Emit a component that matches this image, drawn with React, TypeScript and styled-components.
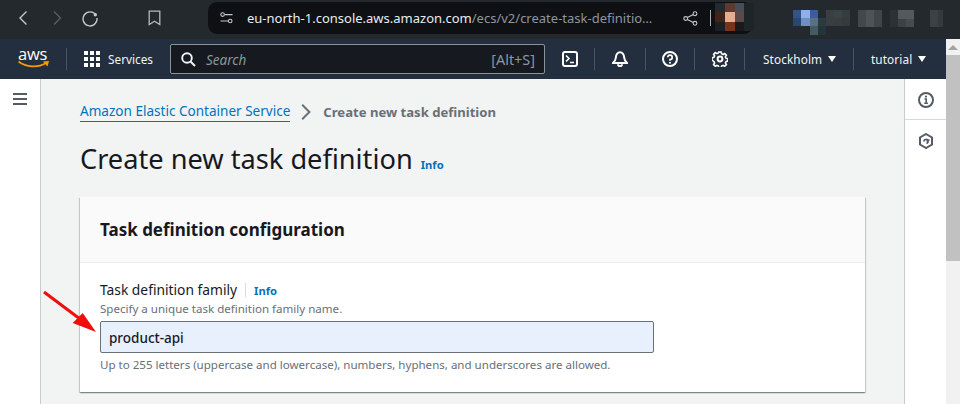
import React from "react";
import styled, { createGlobalStyle } from "styled-components";

const Global = createGlobalStyle`
  html, body { margin: 0; padding: 0; width: 960px; height: 404px; overflow: hidden; background: #f2f3f3; }
  * { box-sizing: border-box; }
  body { font-family: "Noto Sans", "Open Sans", sans-serif; }
`;

const Page = styled.div`
  position: relative;
  width: 960px;
  height: 404px;
  display: flex;
  flex-direction: column;
  overflow: hidden;
`;

const BrowserBar = styled.header`
  height: 39px;
  flex: none;
  background: #23292d;
  display: flex;
  align-items: flex-start;
`;

const ChromeBtn = styled.div<{ $w: number }>`
  width: ${(p) => p.$w}px;
  height: 36px;
  flex: none;
  display: flex;
  align-items: center;
  justify-content: center;
`;

const UrlBar = styled.div`
  margin-top: 2px;
  margin-left: 11px;
  width: 545px;
  height: 32px;
  flex: none;
  background: #0e1014;
  border-radius: 9px;
  display: flex;
  align-items: center;
  padding-left: 12px;
`;

const UrlText = styled.div`
  margin-left: 14px;
  font-size: 13px;
  line-height: 32px;
  white-space: nowrap;
  color: #e9ecef;
  width: 436px;
  flex: none;
  overflow: hidden;
`;

const UrlDim = styled.span`
  color: #8f969c;
`;

const UrlSep = styled.div`
  width: 1px;
  height: 16px;
  flex: none;
  background: #a9adb0;
  margin-left: 12px;
`;

const Blur = styled.svg`
  display: block;
  flex: none;
  shape-rendering: crispEdges;
`;

const Nav = styled.nav`
  height: 40px;
  width: 946px;
  flex: none;
  background: #232f3e;
  display: flex;
  align-items: center;
  color: #f2f3f3;
  font-size: 12px;
`;

const Logo = styled.div`
  width: 66px;
  height: 40px;
  flex: none;
  position: relative;
  padding-left: 18px;
`;

const LogoText = styled.span`
  display: block;
  font-size: 16.5px;
  line-height: 16px;
  padding-top: 7px;
  color: #ffffff;
  letter-spacing: -0.2px;
  font-family: "Open Sans", sans-serif;
`;

const Smile = styled.svg`
  position: absolute;
  left: 18px;
  top: 21px;
`;

const Sep = styled.div`
  width: 1px;
  height: 22px;
  background: #495566;
  flex: none;
`;

const ServicesBtn = styled.div`
  display: flex;
  align-items: center;
  gap: 8px;
  margin-left: 17px;
  width: 86px;
  flex: none;
  line-height: 16px;
  font-size: 11.8px;
`;

const SearchBox = styled.div`
  width: 375px;
  height: 30px;
  flex: none;
  background: #16191f;
  border: 1px solid #879596;
  border-radius: 2px;
  display: flex;
  align-items: center;
  padding: 0 9px 0 10px;
`;

const SearchHint = styled.span`
  font-style: italic;
  color: #8a979e;
  font-size: 13.5px;
  line-height: 20px;
  padding-top: 1px;
  margin-left: 10px;
  flex: 1;
`;

const Shortcut = styled.span`
  color: #8a979e;
  font-size: 14.4px;
  line-height: 20px;
  padding-top: 1px;
`;

const NavIcon = styled.div<{ $w: number }>`
  width: ${(p) => p.$w}px;
  height: 40px;
  flex: none;
  display: flex;
  align-items: center;
  justify-content: center;
`;

const NavMenu = styled.div<{ $w: number; $pl: number }>`
  width: ${(p) => p.$w}px;
  padding-left: ${(p) => p.$pl}px;
  flex: none;
  display: flex;
  align-items: center;
  gap: 6px;
  font-size: 11.8px;
  letter-spacing: 0.1px;
`;

const Caret = styled.i`
  width: 0;
  height: 0;
  border-left: 4.5px solid transparent;
  border-right: 4.5px solid transparent;
  border-top: 6px solid #ffffff;
`;

const Body = styled.div`
  flex: 1;
  display: flex;
  width: 100%;
  min-height: 0;
`;

const LeftRail = styled.aside`
  width: 41px;
  flex: none;
  background: #ffffff;
  border-right: 1px solid #c6cccc;
  padding: 14px 0 0 13px;
`;

const Main = styled.main`
  flex: 1;
  background: #f2f3f3;
  padding: 23px 39px 0 39px;
  min-width: 0;
`;

const Crumbs = styled.div`
  display: flex;
  align-items: center;
  height: 20px;
  line-height: 18px;
`;

const CrumbLink = styled.a`
  color: #0073bb;
  border-bottom: 1px solid #0073bb;
  font-size: 13.55px;
  line-height: 19px;
  height: 20px;
`;

const CrumbCurrent = styled.span`
  color: #687078;
  font-weight: 700;
  font-size: 13.1px;
  margin-left: 12px;
`;

const TitleRow = styled.div`
  display: flex;
  align-items: baseline;
  margin-top: 15px;
  height: 44px;
`;

const Title = styled.h1`
  margin: 0;
  font-size: 27.2px;
  font-weight: 400;
  line-height: 44px;
  color: #16191f;
`;

const InfoLink = styled.a<{ $ml: number }>`
  color: #0073bb;
  font-weight: 700;
  font-size: 11.2px;
  margin-left: ${(p) => p.$ml}px;
`;

const Card = styled.section`
  margin-top: 16px;
  background: #ffffff;
  width: 785px;
  height: 195px;
  box-shadow: 0 1px 1px 0 rgba(0, 28, 36, 0.3), 1px 1px 1px 0 rgba(0, 28, 36, 0.15), -1px 1px 1px 0 rgba(0, 28, 36, 0.15);
`;

const CardHeader = styled.div`
  height: 66px;
  background: #fafafa;
  border-bottom: 1px solid #eaeded;
  padding: 0 20px;
  display: flex;
  align-items: center;
`;

const CardTitle = styled.h2`
  margin: 0;
  font-size: 17px;
  font-weight: 700;
  color: #16191f;
  line-height: 22px;
`;

const CardBody = styled.div`
  padding: 18px 20px 0;
`;

const LabelRow = styled.div`
  display: flex;
  align-items: center;
  height: 18px;
`;

const Label = styled.label`
  font-size: 13.8px;
  color: #16191f;
  line-height: 18px;
`;

const LabelSep = styled.span`
  width: 1px;
  height: 14px;
  background: #d5dbdb;
  margin-left: 8px;
`;

const Hint = styled.div`
  font-size: 11.55px;
  line-height: 16px;
  color: #687078;
  margin-top: 2px;
`;

const Field = styled.input`
  display: block;
  width: 554px;
  height: 32px;
  margin: 4px 0;
  padding: 2px 8px 0;
  background: #e8f0fe;
  border: 1px solid #687078;
  border-radius: 2px;
  font: inherit;
  font-size: 13.5px;
  font-weight: 500;
  color: #16191f;
  outline: none;
`;

const RightRail = styled.aside`
  width: 42px;
  flex: none;
  background: #ffffff;
  border-left: 1px solid #c6cccc;
  display: flex;
  flex-direction: column;
`;

const RailCell = styled.div<{ $h: number; $line?: boolean }>`
  height: ${(p) => p.$h}px;
  display: flex;
  align-items: flex-start;
  justify-content: center;
  padding-top: 13px;
  border-bottom: ${(p) => (p.$line ? "1px solid #d5dbdb" : "none")};
`;

const Scrollbar = styled.div`
  width: 14px;
  flex: none;
  background: #f1f1f1;
  margin-top: -40px;
  display: flex;
  flex-direction: column;
  align-items: center;
  position: relative;
  z-index: 2;
`;

const ScrollArrow = styled.i`
  width: 0;
  height: 0;
  margin-top: 6px;
  border-left: 5px solid transparent;
  border-right: 5px solid transparent;
  border-bottom: 5px solid #a3a3a3;
`;

const ScrollThumb = styled.div`
  margin-top: 5px;
  width: 14px;
  height: 206px;
  background: #c1c1c1;
`;

const Arrow = styled.svg`
  position: absolute;
  left: 40px;
  top: 288px;
  pointer-events: none;
`;

const blur1: [number, number, number, number, string][] = [
  [0, 0, 10, 10, "#23292d"], [10, 0, 10, 10, "#5c3b2e"], [20, 0, 9, 10, "#4c4c56"],
  [0, 10, 10, 10, "#42231a"], [10, 10, 10, 10, "#e7ad93"], [20, 10, 9, 10, "#5c4a4b"],
  [29, 0, 10, 30, "#1e2529"], [0, 20, 10, 10, "#1c2024"], [10, 20, 10, 10, "#7c3216"], [20, 20, 9, 10, "#1a1a1d"],
];

const blur2: [number, number, number, number, string][] = [
  [0, 0, 9, 8, "#8fb1ea"], [9, 0, 8, 8, "#3c5d9b"], [-8, 0, 8, 8, "#345188"],
  [-8, 8, 8, 8, "#2c4672"], [0, 8, 9, 8, "#6f8fc2"], [9, 8, 8, 8, "#5a7280"],
  [17, 8, 8, 8, "#2c3b40"], [9, 16, 8, 9, "#465a62"], [17, 16, 8, 9, "#25343a"],
  [25, 0, 8, 8, "#394043"], [33, 0, 8, 8, "#3b4345"], [41, 0, 8, 8, "#363d3f"],
  [25, 8, 8, 8, "#393f41"], [33, 8, 8, 8, "#363e40"], [41, 8, 8, 8, "#343b3d"],
  [57, 0, 8, 17, "#43484d"], [65, 0, 8, 17, "#4e5357"], [73, 0, 8, 17, "#3f4649"],
  [89, 0, 8, 17, "#2b3236"], [97, 0, 16, 9, "#53595c"], [97, 9, 8, 8, "#3b4245"], [105, 9, 8, 8, "#464c4e"],
  [129, 0, 8, 17, "#3b4144"], [137, 0, 8, 17, "#33393c"],
];

const ic = { fill: "none", stroke: "#ffffff", strokeWidth: 2 };

export default function App() {
  return (
    <Page>
      <Global />
      <BrowserBar>
        <ChromeBtn $w={46}>
          <svg width="12" height="16" viewBox="0 0 12 16"><path d="M9.5 1.5 3 8l6.5 6.5" fill="none" stroke="#c4c8cb" strokeWidth="1.4" /></svg>
        </ChromeBtn>
        <ChromeBtn $w={22}>
          <svg width="12" height="16" viewBox="0 0 12 16"><path d="M3 1.5 9.5 8 3 14.5" fill="none" stroke="#585e62" strokeWidth="1.4" /></svg>
        </ChromeBtn>
        <ChromeBtn $w={44}>
          <svg width="18" height="18" viewBox="0 0 18 18"><path d="M15 6.2A7 7 0 1 0 16 9" fill="none" stroke="#c4c8cb" strokeWidth="1.4" /><circle cx="14.3" cy="5.8" r="1.7" fill="#c4c8cb" /></svg>
        </ChromeBtn>
        <ChromeBtn $w={85}>
          <svg width="13" height="16" viewBox="0 0 13 16"><path d="M1.2 1.2h10.6v13.4L6.5 11.2 1.2 14.6z" fill="none" stroke="#b4b8bb" strokeWidth="1.3" /></svg>
        </ChromeBtn>
        <UrlBar>
          <svg width="13" height="12" viewBox="0 0 13 12" fill="none" stroke="#c4c8cb" strokeWidth="1.1" style={{ flex: "none" }}>
            <circle cx="2.6" cy="2.6" r="1.8" /><path d="M5 2.6h7.5M0.5 9H8" /><circle cx="10.2" cy="9" r="1.8" />
          </svg>
          <UrlText>
            eu-north-1.console.aws.amazon.com<UrlDim>/ecs/v2/create-task-definitio…</UrlDim>
          </UrlText>
          <svg width="15" height="15" viewBox="0 0 15 15" fill="none" stroke="#c4c8cb" strokeWidth="1.1" style={{ flex: "none" }}>
            <circle cx="12" cy="2.7" r="1.9" /><circle cx="2.7" cy="7.5" r="1.9" /><circle cx="12" cy="12.3" r="1.9" /><path d="M4.4 6.6 10.3 3.6M4.4 8.4l5.9 3" />
          </svg>
          <UrlSep />
          <Blur width="39" height="28" viewBox="0 0 39 30" preserveAspectRatio="none" style={{ marginLeft: 4, marginTop: -2 }}>
            {blur1.map((b, i) => <rect key={i} x={b[0]} y={b[1]} width={b[2]} height={b[3]} fill={b[4]} />)}
          </Blur>
        </UrlBar>
        <Blur width="150" height="28" viewBox="-8 0 150 28" style={{ marginLeft: 40, marginTop: 10, flex: "none" }}>
          {blur2.map((b, i) => <rect key={i} x={b[0]} y={b[1]} width={b[2]} height={b[3]} fill={b[4]} />)}
        </Blur>
      </BrowserBar>
      <Nav>
        <Logo>
          <LogoText>aws</LogoText>
          <Smile width="32" height="10" viewBox="0 0 32 10">
            <path d="M0.5 1.5C8 7.5 20 8 28 3" fill="none" stroke="#ff9900" strokeWidth="1.7" />
            <path d="M25 1.5 31 1l-1.5 5.5z" fill="#ff9900" />
          </Smile>
        </Logo>
        <Sep />
        <ServicesBtn>
          <svg width="16" height="16" viewBox="0 0 16 16" fill="#fff" style={{ flex: "none" }}>
            {[0, 6, 12].flatMap((y) => [0, 6, 12].map((x) => <rect key={`${x}${y}`} x={x} y={y} width="4" height="4" />))}
          </svg>
          <span>Services</span>
        </ServicesBtn>
        <SearchBox>
          <svg width="15" height="15" viewBox="0 0 15 15" fill="none" stroke="#f2f3f3" strokeWidth="1.9" style={{ flex: "none" }}>
            <circle cx="6" cy="6" r="4.8" /><path d="m9.5 9.5 4.5 4.5" />
          </svg>
          <SearchHint>Search</SearchHint>
          <Shortcut>[Alt+S]</Shortcut>
        </SearchBox>
        <NavIcon $w={49}>
          <svg width="16" height="16" viewBox="0 0 16 16" {...ic}>
            <rect x="1" y="1" width="14" height="14" rx="2" /><path d="m4 4.5 3 3-3 3M8 11.5h4" strokeWidth="1.6" />
          </svg>
        </NavIcon>
        <Sep />
        <NavIcon $w={50}>
          <svg width="16" height="16" viewBox="0 0 16 16" {...ic}>
            <path d="M1 12h14c-1.6-1.3-2.6-3-2.8-5.3C12 3.8 10.4 1.2 8 1.2S4 3.8 3.8 6.7C3.6 9 2.6 10.7 1 12z" /><path d="M6 13.2a2 2 0 0 0 4 0" />
          </svg>
        </NavIcon>
        <Sep />
        <NavIcon $w={48}>
          <svg width="16" height="16" viewBox="0 0 16 16" {...ic}>
            <circle cx="8" cy="8" r="7" /><path d="M5.8 6.3A2.2 2.2 0 1 1 8 8.6v1.1" strokeWidth="1.7" /><circle cx="8" cy="11.8" r="1" fill="#fff" stroke="none" />
          </svg>
        </NavIcon>
        <Sep />
        <NavIcon $w={49}>
          <svg width="16" height="16" viewBox="0 0 16 16" {...ic}>
            <circle cx="8" cy="8" r="2.4" />
            <path d="M6.8 1h2.4l.4 1.8 1.5.7 1.6-1 1.7 1.7-1 1.6.7 1.5 1.8.4v2.4l-1.8.4-.7 1.5 1 1.6-1.7 1.7-1.6-1-1.5.7-.4 1.8H6.8l-.4-1.8-1.5-.7-1.6 1-1.7-1.7 1-1.6-.7-1.5L.1 9.2V6.8l1.8-.4.7-1.5-1-1.6 1.7-1.7 1.6 1 1.5-.7z" strokeWidth="1.6" />
          </svg>
        </NavIcon>
        <Sep />
        <NavMenu $w={108} $pl={18}>Stockholm <Caret /></NavMenu>
        <Sep />
        <NavMenu $w={92} $pl={17}>tutorial <Caret /></NavMenu>
      </Nav>
      <Body>
        <LeftRail>
          <svg width="14" height="12" viewBox="0 0 14 12" fill="#545b64" style={{ display: "block" }}>
            <rect y="0" width="14" height="2" /><rect y="5" width="14" height="2" /><rect y="10" width="14" height="2" />
          </svg>
        </LeftRail>
        <Main>
          <Crumbs>
            <CrumbLink>Amazon Elastic Container Service</CrumbLink>
            <svg width="10" height="16" viewBox="0 0 10 16" style={{ marginLeft: 11, flex: "none" }}>
              <path d="M1.2 0.8 8.4 8l-7.2 7.2" fill="none" stroke="#687078" strokeWidth="2" />
            </svg>
            <CrumbCurrent>Create new task definition</CrumbCurrent>
          </Crumbs>
          <TitleRow>
            <Title>Create new task definition</Title>
            <InfoLink $ml={8}>Info</InfoLink>
          </TitleRow>
          <Card>
            <CardHeader>
              <CardTitle>Task definition configuration</CardTitle>
            </CardHeader>
            <CardBody>
              <LabelRow>
                <Label>Task definition family</Label>
                <LabelSep />
                <InfoLink $ml={8}>Info</InfoLink>
              </LabelRow>
              <Hint>Specify a unique task definition family name.</Hint>
              <Field readOnly value="product-api" />
              <Hint>Up to 255 letters (uppercase and lowercase), numbers, hyphens, and underscores are allowed.</Hint>
            </CardBody>
          </Card>
        </Main>
        <RightRail>
          <RailCell $h={41} $line>
            <svg width="16" height="16" viewBox="0 0 16 16" fill="none" stroke="#545b64" strokeWidth="2">
              <circle cx="8" cy="8" r="7" /><path d="M6.5 7H8.2v4M6.3 11.2h3.6" strokeWidth="1.6" /><circle cx="8" cy="4.6" r="1.1" fill="#545b64" stroke="none" />
            </svg>
          </RailCell>
          <RailCell $h={40}>
            <svg width="14" height="16" viewBox="0 0 14 16" fill="none" stroke="#545b64" strokeWidth="2">
              <path d="M7 1 13 4.5v7L7 15 1 11.5v-7z" /><path d="M5 8.5a2 2 0 1 1 2.5 1.9M7.5 8 10.5 6.8" strokeWidth="1.7" />
            </svg>
          </RailCell>
        </RightRail>
        <Scrollbar>
          <ScrollArrow />
          <ScrollThumb />
        </Scrollbar>
      </Body>
      <Arrow width="60" height="48" viewBox="0 0 60 48">
        <path d="M4 4 40 31" stroke="#f00d0d" strokeWidth="3" fill="none" />
        <path d="M56 44 32.7 35 42.7 25z" fill="#f00d0d" />
      </Arrow>
    </Page>
  );
}
